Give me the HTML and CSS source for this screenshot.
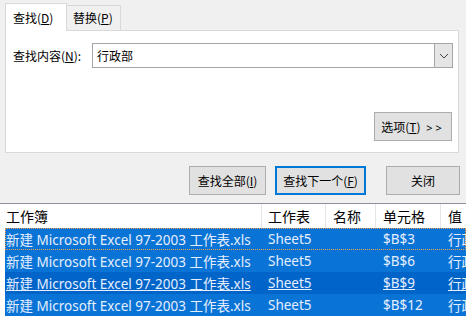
FILE: index.html
```html
<!DOCTYPE html>
<html lang="zh-CN">
<head>
    <meta charset="UTF-8">
    <title>查找和替换</title>
    <link rel="stylesheet" href="styles.css">
</head>
<body>

<div class="dialog">
    <div class="tabs">
        <div class="tab active">查找(<u>D</u>)</div>
        <div class="tab">替换(<u>P</u>)</div>
    </div>
    <div class="panel">
        <div class="find-row">
            <label class="find-label">查找内容(<u>N</u>):</label>
            <div class="combo">
                <span class="combo-text">行政部</span>
                <span class="combo-btn">
                    <svg width="10" height="6" viewBox="0 0 10 6"><path d="M1 1 L5 5 L9 1" fill="none" stroke="#444" stroke-width="1"/></svg>
                </span>
            </div>
        </div>
        <div class="options-row">
            <button class="btn btn-options">选项(<u>T</u>) <span class="arrows">&gt;&gt;</span></button>
        </div>
    </div>
    <div class="actions">
        <button class="btn btn-all">查找全部(<u>I</u>)</button>
        <button class="btn btn-next">查找下一个(<u>F</u>)</button>
        <button class="btn btn-close">关闭</button>
    </div>
</div>

<div class="results">
    <div class="row head">
        <div class="c c-book">工作簿</div>
        <div class="c c-sheet">工作表</div>
        <div class="c c-name">名称</div>
        <div class="c c-cell">单元格</div>
        <div class="c c-val">值</div>
    </div>
    <div class="row sel focus">
        <div class="c c-book">新建 Microsoft Excel 97-2003 工作表.xls</div>
        <div class="c c-sheet">Sheet5</div>
        <div class="c c-name"></div>
        <div class="c c-cell">$B$3</div>
        <div class="c c-val">行政部</div>
    </div>
    <div class="row sel">
        <div class="c c-book">新建 Microsoft Excel 97-2003 工作表.xls</div>
        <div class="c c-sheet">Sheet5</div>
        <div class="c c-name"></div>
        <div class="c c-cell">$B$6</div>
        <div class="c c-val">行政部</div>
    </div>
    <div class="row sel hot">
        <div class="c c-book">新建 Microsoft Excel 97-2003 工作表.xls</div>
        <div class="c c-sheet">Sheet5</div>
        <div class="c c-name"></div>
        <div class="c c-cell">$B$9</div>
        <div class="c c-val">行政部</div>
    </div>
    <div class="row sel">
        <div class="c c-book">新建 Microsoft Excel 97-2003 工作表.xls</div>
        <div class="c c-sheet">Sheet5</div>
        <div class="c c-name"></div>
        <div class="c c-cell">$B$12</div>
        <div class="c c-val">行政部</div>
    </div>
</div>

</body>
</html>
```

FILE: styles.css
```css
body {
    margin: 0;
    background: #f0f0f0;
    font-family: "Noto Sans CJK SC", "Noto Sans", sans-serif;
    font-size: 12px;
    color: #000;
    width: 466px;
    height: 317px;
    overflow: hidden;
}
u {
    text-decoration: underline;
    text-underline-offset: 1px;
}
.dialog {
    height: 203px;
    border-bottom: 1px solid #8f8f9d;
}
.tabs {
    display: flex;
    align-items: flex-end;
    padding: 3px 0 0 5px;
    height: 27px;
}
.tab {
    height: 24px;
    padding: 0 6px;
    background: #f0f0f0;
    border: 1px solid #d9d9d9;
    border-bottom: none;
    display: flex;
    align-items: center;
    line-height: 1;
}
.tab.active {
    height: 27px;
    width: 47px;
    background: #fff;
    margin-bottom: -1px;
    position: relative;
    z-index: 1;
    padding-left: 7px;
}
.tab + .tab {
    border-left: none;
    width: 41px;
}
.panel {
    margin: 0 7px 0 5px;
    height: 121px;
    background: #fff;
    border: 1px solid #d9d9d9;
    display: flex;
    flex-direction: column;
    justify-content: space-between;
}
.find-row {
    display: flex;
    align-items: center;
    padding: 12px 5px 0 7px;
}
.find-label {
    width: 79px;
}
.combo {
    flex: 1;
    height: 23px;
    border: 1px solid #a6a6a6;
    display: flex;
    align-items: center;
}
.combo-text {
    flex: 1;
    padding-left: 4px;
}
.combo-btn {
    width: 17px;
    height: 23px;
    background: #e5e5e5;
    border-left: 1px solid #a6a6a6;
    display: flex;
    align-items: center;
    justify-content: center;
}
.options-row {
    display: flex;
    justify-content: flex-end;
    padding: 0 6px 11px 0;
}
.btn {
    font-family: "Noto Sans CJK SC", "Noto Sans", sans-serif;
    font-size: 12px;
    color: #000;
    background: #e1e1e1;
    border: 1px solid #adadad;
    height: 29px;
    padding: 0;
}
.btn-options {
    width: 78px;
}
.arrows {
    letter-spacing: 3px;
    margin-left: 3px;
    font-family: "Noto Sans", sans-serif;
    font-size: 11px;
}
.actions {
    display: flex;
    padding: 13px 0 0 189px;
    gap: 9px;
}
.btn-all {
    width: 77px;
}
.btn-next {
    width: 91px;
    border: 2px solid #0078d7;
}
.btn-close {
    width: 74px;
    margin-left: 11px;
}
.results {
    background: #fff;
    height: 113px;
    padding-left: 5px;
}
.row {
    display: flex;
    height: 22px;
    align-items: center;
    font-size: 13px;
    white-space: nowrap;
}
.row.head {
    height: 24px;
    font-size: 14px;
}
.row.head .c {
    border-right: 1px solid #e5e5e5;
    height: 24px;
    line-height: 24px;
}
.c {
    flex-shrink: 0;
    overflow: hidden;
    padding-left: 1px;
    box-sizing: border-box;
}
.c-book { width: 257px; }
.c-sheet { width: 64px; padding-left: 6px; }
.c-name { width: 50px; padding-left: 7px; }
.c-cell { width: 65px; padding-left: 7px; }
.c-val { width: 25px; padding-left: 7px; border-right: none !important; }
.row.sel {
    background: #0a74d6;
    color: #e6efff;
    font-family: "Noto Sans", "Noto Sans CJK SC", sans-serif;
    font-size: 13.5px;
}
.row.sel.hot {
    background: #0064c8;
    text-decoration: underline;
}
.row.focus {
    outline: 1px dotted #f0a050;
    outline-offset: -1px;
}
```
